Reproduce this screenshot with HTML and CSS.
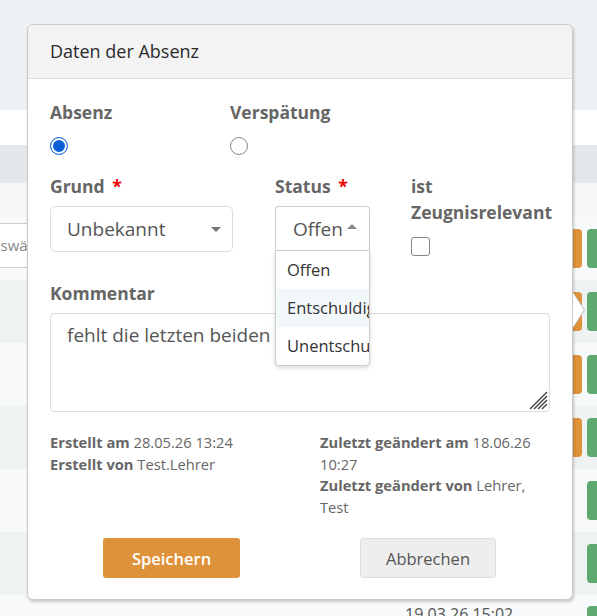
FILE: index.html
```html
<!DOCTYPE html>
<html lang="de">

<head>
    <meta charset="UTF-8">
    <meta name="viewport" content="width=device-width, initial-scale=1.0">
    <title>Daten der Absenz</title>
    <link rel="stylesheet" href="styles.css">
</head>

<body>
    <!-- Liste im Hintergrund -->
    <div class="page">
        <div class="topbar"></div>
        <div class="gap-row"></div>
        <div class="table-head"></div>
        <div class="filter-row"></div>
        <div class="row light">
            <div class="filter-input">auswählen</div>
            <div class="marks"><span class="mark orange"></span><span class="mark green"></span></div>
        </div>
        <div class="row grey">
            <div></div>
            <div class="marks"><span class="mark orange"></span><span class="mark green"></span></div>
        </div>
        <div class="row light">
            <div></div>
            <div class="marks"><span class="mark orange"></span><span class="mark green"></span></div>
        </div>
        <div class="row grey">
            <div></div>
            <div class="marks"><span class="mark orange"></span><span class="mark green"></span></div>
        </div>
        <div class="row light">
            <div></div>
            <div class="marks"><span class="mark green"></span></div>
        </div>
        <div class="row grey">
            <div></div>
            <div class="marks"><span class="mark green"></span></div>
        </div>
        <div class="row light last">
            <div class="date">19.03.26 15:02</div>
            <div class="marks"><span class="mark green"></span></div>
        </div>
    </div>

    <!-- Popover -->
    <div class="popover">
        <div class="popover-title">Daten der Absenz</div>
        <div class="popover-body">
            <div class="type-row">
                <div class="field">
                    <div class="label">Absenz</div>
                    <input type="radio" name="typ" class="radio" checked>
                </div>
                <div class="field">
                    <div class="label">Verspätung</div>
                    <input type="radio" name="typ" class="radio">
                </div>
            </div>

            <div class="detail-row">
                <div class="field">
                    <div class="label">Grund <span class="req">*</span></div>
                    <div class="select">Unbekannt<span class="caret down"></span></div>
                </div>
                <div class="field">
                    <div class="label">Status <span class="req">*</span></div>
                    <div class="dropdown">
                        <div class="select open">Offen<span class="caret up"></span></div>
                        <ul class="options">
                            <li>Offen</li>
                            <li class="hover">Entschuldigt</li>
                            <li>Unentschuldigt</li>
                        </ul>
                    </div>
                </div>
                <div class="field">
                    <div class="label">ist Zeugnisrelevant</div>
                    <input type="checkbox" class="check">
                </div>
            </div>

            <div class="comment">
                <div class="label">Kommentar</div>
                <div class="textarea-wrap">
                    <textarea>fehlt die letzten beiden Stunden</textarea>
                    <svg class="grip" width="20" height="20" viewBox="0 0 20 20">
                        <path d="M19 2 L2 19 M19 6 L6 19 M19 10 L10 19 M19 14 L14 19" stroke="#4a4a4a" stroke-width="1.5" fill="none" />
                    </svg>
                </div>
            </div>

            <div class="meta">
                <div>
                    <b>Erstellt am</b> 28.05.26 13:24<br>
                    <b>Erstellt von</b> Test.Lehrer
                </div>
                <div>
                    <b>Zuletzt geändert am</b> 18.06.26 10:27<br>
                    <b>Zuletzt geändert von</b> Lehrer, Test
                </div>
            </div>

            <div class="actions">
                <button class="btn save">Speichern</button>
                <button class="btn cancel">Abbrechen</button>
            </div>
        </div>
    </div>
</body>

</html>
```

FILE: styles.css
```css
body {
    margin: 0;
    width: 597px;
    height: 616px;
    overflow: hidden;
    position: relative;
    font-family: "Open Sans", "Liberation Sans", sans-serif;
    background: #f6f8f9;
}

/* Hintergrund */

.topbar {
    height: 110px;
    background: #eef1f3;
}

.gap-row {
    height: 35px;
    background: #fff;
}

.table-head {
    height: 38px;
    background: #e3e8eb;
}

.filter-row {
    height: 34px;
    background: #f6f7f9;
}

.row {
    height: 63px;
    display: flex;
    justify-content: space-between;
    align-items: center;
}

.row.light {
    background: #f8f9fa;
}

.row.grey {
    background: #eff2f3;
}

.row.last {
    align-items: flex-start;
}

.filter-input {
    align-self: flex-start;
    margin-top: 6px;
    margin-left: -31px;
    width: 200px;
    height: 43px;
    padding-left: 13px;
    border: 1px solid #ccc;
    background: #fff;
    color: #888;
    font-size: 15px;
    line-height: 43px;
}

.date {
    padding: 8px 0 0 405px;
    color: #555;
    font-size: 16px;
    line-height: 22px;
}

.marks {
    display: flex;
    gap: 5px;
}

.row.last .marks {
    margin-top: 11px;
}

.mark {
    display: block;
    height: 39px;
    border-radius: 4px;
}

.mark.orange {
    width: 40px;
    background: #de9239;
}

.mark.green {
    width: 10px;
    background: #5ea96f;
    border-radius: 4px 0 0 4px;
}

/* Popover */

.popover {
    position: absolute;
    left: 27px;
    top: 24px;
    width: 546px;
    box-sizing: border-box;
    background: #fff;
    border: 1px solid #c9c9c9;
    border-radius: 6px;
    box-shadow: 1px 2px 3px rgba(0, 0, 0, 0.2);
}

.popover::before {
    content: '';
    position: absolute;
    right: -13px;
    top: 267px;
    border-style: solid;
    border-width: 18px 0 18px 12px;
    border-color: transparent transparent transparent #b9b9b9;
}

.popover::after {
    content: '';
    position: absolute;
    right: -12px;
    top: 268px;
    border-style: solid;
    border-width: 17px 0 17px 11px;
    border-color: transparent transparent transparent #fff;
}

.popover-title {
    height: 53px;
    padding-left: 22px;
    background: #f3f3f3;
    border-bottom: 1px solid #ddd;
    border-radius: 6px 6px 0 0;
    color: #2b2b2b;
    font-size: 18px;
    font-weight: 500;
    line-height: 53px;
}

.popover-body {
    padding: 20px 22px 21px 22px;
}

.label {
    color: #666;
    font-size: 17.5px;
    font-weight: 700;
    line-height: 26px;
}

.req {
    color: #e00;
    margin-left: 3px;
}

.type-row {
    display: grid;
    grid-template-columns: 180px 1fr;
}

.radio {
    appearance: none;
    display: block;
    margin: 12px 0 0 0;
    width: 18px;
    height: 18px;
    box-sizing: border-box;
    border: 1px solid #888;
    border-radius: 50%;
    background: #fff;
}

.radio:checked {
    border: 1.5px solid #2a72de;
    background: #0a5fd7;
    box-shadow: inset 0 0 0 2px #fff;
}

.detail-row {
    display: grid;
    grid-template-columns: 225px 136px 1fr;
    margin-top: 18px;
}

.select {
    position: relative;
    margin-top: 7px;
    width: 183px;
    height: 46px;
    box-sizing: border-box;
    padding-left: 16px;
    border: 1px solid #ddd;
    border-radius: 5px;
    color: #555;
    font-size: 19px;
    line-height: 44px;
}

.caret {
    position: absolute;
    right: 11px;
    top: 20px;
    border-style: solid;
    border-color: transparent;
}

.caret.down {
    border-width: 5px 5px 0 5px;
    border-top-color: #777;
}

.dropdown {
    position: relative;
    margin-top: 7px;
}

.select.open {
    margin-top: 0;
    width: 95px;
    height: 44px;
    padding-left: 17px;
    border-color: #ccc;
    border-bottom: none;
    border-radius: 4px 4px 0 0;
    line-height: 44px;
}

.caret.up {
    right: 12px;
    top: 17px;
    border-width: 0 5px 5px 5px;
    border-bottom-color: #888;
}

.options {
    position: absolute;
    left: 0;
    top: 44px;
    z-index: 2;
    width: 95px;
    box-sizing: border-box;
    margin: 0;
    padding: 0;
    list-style: none;
    background: #fff;
    border: 1px solid #ccc;
    border-radius: 0 0 4px 4px;
    box-shadow: 0 2px 4px rgba(0, 0, 0, 0.15);
    overflow: hidden;
}

.options li {
    height: 38px;
    padding-left: 11px;
    color: #333;
    font-size: 16.5px;
    line-height: 38px;
    white-space: nowrap;
}

.options li.hover {
    background: #f2f7fa;
}

.check {
    appearance: none;
    display: block;
    margin: 12px 0 0 0;
    width: 19px;
    height: 19px;
    box-sizing: border-box;
    border: 1px solid #888;
    border-radius: 3px;
    background: #fff;
}

.comment {
    margin-top: 24px;
}

.textarea-wrap {
    position: relative;
    margin-top: 7px;
}

.textarea-wrap textarea {
    display: block;
    width: 500px;
    height: 99px;
    box-sizing: border-box;
    margin: 0;
    padding: 8px 16px;
    border: 1px solid #ddd;
    border-radius: 4px;
    resize: none;
    color: #555;
    font-family: "Open Sans", "Liberation Sans", sans-serif;
    font-size: 19px;
    line-height: 26px;
}

.grip {
    position: absolute;
    right: 2px;
    bottom: 2px;
}

.meta {
    display: grid;
    grid-template-columns: 270px 230px;
    margin-top: 20px;
    color: #666;
    font-size: 14.7px;
    line-height: 21.5px;
}

.meta b {
    font-weight: 700;
}

.actions {
    display: flex;
    gap: 120px;
    margin-top: 20px;
    padding-left: 53px;
}

.btn {
    height: 40px;
    border-radius: 3px;
    font-family: "Open Sans", "Liberation Sans", sans-serif;
    font-size: 16.5px;
    cursor: pointer;
}

.btn.save {
    width: 137px;
    border: none;
    background: #de9239;
    color: #fff;
    font-weight: 600;
}

.btn.cancel {
    width: 136px;
    border: 1px solid #ddd;
    background: #eee;
    color: #555;
    font-weight: 500;
}
```
